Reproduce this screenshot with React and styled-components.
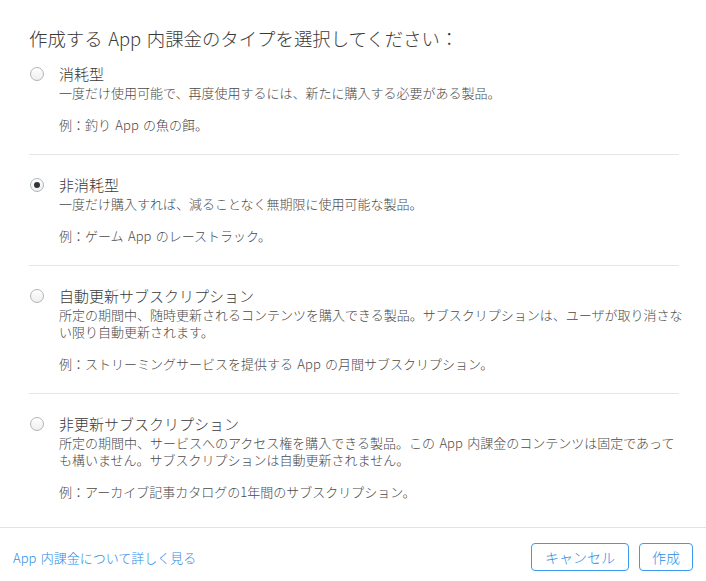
import React from "react";
import styled, { createGlobalStyle } from "styled-components";

const GlobalStyle = createGlobalStyle`
  html, body {
    margin: 0;
    padding: 0;
    background: #ffffff;
  }
  body {
    font-family: "Noto Sans CJK JP", "Liberation Sans", sans-serif;
    font-weight: 300;
    color: #333333;
  }
`;

const Page = styled.div`
  width: 706px;
  height: 100vh;
  display: flex;
  flex-direction: column;
  box-sizing: border-box;
`;

const Main = styled.div`
  flex: 1;
  padding: 26px 22px 0 29px;
`;

const Heading = styled.h1`
  margin: 0;
  font-size: 18.4px;
  line-height: 24px;
  font-weight: 300;
  word-spacing: 1.5px;
  color: #3a3a3a;
`;

const OptionList = styled.div`
  display: flex;
  flex-direction: column;
`;

const Option = styled.label`
  display: flex;
  padding: ${(p) => (p.$first ? "14px" : "20px")} 0 21px 0;
  cursor: pointer;
`;

const Divider = styled.hr`
  margin: 0 5px 0 0;
  border: none;
  border-top: 1px solid #e6e6e6;
`;

const RadioCol = styled.div`
  width: 30px;
  flex: none;
  display: flex;
  padding-top: 3px;
  align-items: flex-start;
`;

const Radio = styled.span`
  width: 14px;
  height: 14px;
  margin-left: 1px;
  border-radius: 50%;
  box-sizing: border-box;
  border: 1px solid ${(p) => (p.$checked ? "#a9b8c3" : "#b4b4b4")};
  background: linear-gradient(#ffffff, #eeeeee);
  display: flex;
  align-items: center;
  justify-content: center;
  &::after {
    content: "";
    width: 6px;
    height: 6px;
    border-radius: 50%;
    background: #333333;
    display: ${(p) => (p.$checked ? "block" : "none")};
  }
`;

const OptionBody = styled.div`
  width: 625px;
  display: flex;
  flex-direction: column;
`;

const OptionTitle = styled.div`
  font-size: 15px;
  line-height: 20px;
  color: #3a3a3a;
`;

const Text = styled.p`
  margin: ${(p) => (p.$example ? "15px 0 0" : "0")};
  font-size: 13px;
  line-height: 17px;
  word-spacing: 1.5px;
  color: #4a4a4a;
`;

const Footer = styled.div`
  border-top: 1px solid #e3e3e3;
  padding: 15px 13px 10px 13px;
  display: flex;
  align-items: center;
  justify-content: space-between;
`;

const HelpLink = styled.a`
  font-size: 13px;
  word-spacing: 1.5px;
  color: #2b8ce8;
  text-decoration: none;
  cursor: pointer;
`;

const Actions = styled.div`
  display: flex;
  gap: 10px;
`;

const Button = styled.button`
  height: 28px;
  padding: 0 ${(p) => (p.$wide ? "13px" : "12px")};
  font-family: inherit;
  font-weight: 300;
  font-size: 14px;
  color: #2b8ce8;
  background: #ffffff;
  border: 1px solid #3c9bf0;
  border-radius: 4px;
  cursor: pointer;
`;

const options = [
  {
    title: "消耗型",
    desc: "一度だけ使用可能で、再度使用するには、新たに購入する必要がある製品。",
    example: "例：釣り App の魚の餌。",
  },
  {
    title: "非消耗型",
    desc: "一度だけ購入すれば、減ることなく無期限に使用可能な製品。",
    example: "例：ゲーム App のレーストラック。",
    checked: true,
  },
  {
    title: "自動更新サブスクリプション",
    desc: "所定の期間中、随時更新されるコンテンツを購入できる製品。サブスクリプションは、ユーザが取り消さない限り自動更新されます。",
    example: "例：ストリーミングサービスを提供する App の月間サブスクリプション。",
  },
  {
    title: "非更新サブスクリプション",
    desc: "所定の期間中、サービスへのアクセス権を購入できる製品。この App 内課金のコンテンツは固定であっても構いません。サブスクリプションは自動更新されません。",
    example: "例：アーカイブ記事カタログの1年間のサブスクリプション。",
  },
];

const App = () => {
  return (
    <Page>
      <GlobalStyle />
      <Main>
        <Heading>作成する App 内課金のタイプを選択してください：</Heading>
        <OptionList>
          {options.map((o, i) => (
            <React.Fragment key={o.title}>
              {i > 0 && <Divider />}
              <Option $first={i === 0}>
                <RadioCol>
                  <Radio $checked={o.checked} />
                </RadioCol>
                <OptionBody>
                  <OptionTitle>{o.title}</OptionTitle>
                  <Text>{o.desc}</Text>
                  <Text $example>{o.example}</Text>
                </OptionBody>
              </Option>
            </React.Fragment>
          ))}
        </OptionList>
      </Main>
      <Footer>
        <HelpLink>App 内課金について詳しく見る</HelpLink>
        <Actions>
          <Button $wide>キャンセル</Button>
          <Button>作成</Button>
        </Actions>
      </Footer>
    </Page>
  );
};

export default App;
